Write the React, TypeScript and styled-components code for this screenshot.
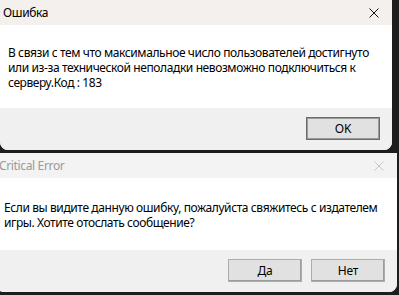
import React from 'react'
import styled, { createGlobalStyle } from 'styled-components'

const GlobalStyle = createGlobalStyle`
  html, body {
    margin: 0;
    padding: 0;
    background: #1d1d1d;
    overflow: hidden;
  }
  body {
    font-family: "Noto Sans", "Open Sans", sans-serif;
  }
`

const Desktop = styled.div`
  width: 399px;
  height: 295px;
  display: flex;
  flex-direction: column;
  gap: 3px;
  overflow: hidden;
`

const Window = styled.div<{ $width: number; $shift: number }>`
  width: ${p => p.$width}px;
  margin-left: ${p => p.$shift}px;
  flex-shrink: 0;
  display: flex;
  flex-direction: column;
  border-radius: 0 0 8px 8px;
  overflow: hidden;
  background: #f0f0f0;
`

const TitleBar = styled.div<{ $active: boolean }>`
  height: 25px;
  display: flex;
  align-items: center;
  justify-content: space-between;
  padding: 0 13px 0 3px;
  background: ${p => (p.$active ? '#f3f0ee' : '#f3f3f3')};
  color: ${p => (p.$active ? '#000' : '#9a9a9a')};
  font-size: 12px;
  letter-spacing: -0.35px;
`

const Body = styled.div<{ $height: number; $top: number }>`
  height: ${p => p.$height}px;
  box-sizing: border-box;
  padding: ${p => p.$top}px 8px 0 8px;
  display: flex;
  flex-direction: column;
  background: #fff;
  color: #000;
  font-size: 12px;
  letter-spacing: -0.4px;
  white-space: nowrap;
`

const Line = styled.div`
  height: 15px;
  line-height: 15px;
`

const Footer = styled.div`
  height: 42px;
  display: flex;
  align-items: center;
  justify-content: flex-end;
  gap: 9px;
  padding-right: 12px;
  background: #f0f0f0;
`

const Button = styled.button<{ $default?: boolean }>`
  width: 74px;
  height: 23px;
  margin-top: -1px;
  padding: 0;
  background: #e1e1e1;
  color: #000;
  font-family: "Noto Sans", "Open Sans", sans-serif;
  font-size: 12px;
  letter-spacing: -0.2px;
  border: 1px solid ${p => (p.$default ? '#6c6c6c' : '#adadad')};
  box-shadow: ${p =>
    p.$default ? 'inset 0 0 0 1px #9a9a9a' : 'inset -1px -1px 0 #9c9c9c'};
`

const CloseIcon = ({ color }: { color: string }) => (
  <svg width="10" height="10" viewBox="0 0 10 10">
    <path d="M0.5 0.5 L9.5 9.5 M9.5 0.5 L0.5 9.5" stroke={color} strokeWidth="1" />
  </svg>
)

export default function App() {
  return (
    <>
      <GlobalStyle />
      <Desktop>
        <Window $width={392} $shift={0}>
          <TitleBar $active>
            <span>Ошибка</span>
            <CloseIcon color="#111" />
          </TitleBar>
          <Body $height={83} $top={20}>
            <Line>В связи с тем что максимальное число пользователей достигнуто</Line>
            <Line>или из-за технической неполадки невозможно подключиться к</Line>
            <Line>серверу.Код : 183</Line>
          </Body>
          <Footer>
            <Button $default>OK</Button>
          </Footer>
        </Window>
        <Window $width={401} $shift={-4}>
          <TitleBar $active={false}>
            <span>Critical Error</span>
            <CloseIcon color="#c4c4c4" />
          </TitleBar>
          <Body $height={72} $top={22}>
            <Line>Если вы видите данную ошибку, пожалуйста свяжитесь с издателем</Line>
            <Line>игры. Хотите отослать сообщение?</Line>
          </Body>
          <Footer>
            <Button>Да</Button>
            <Button>Нет</Button>
          </Footer>
        </Window>
      </Desktop>
    </>
  )
}
